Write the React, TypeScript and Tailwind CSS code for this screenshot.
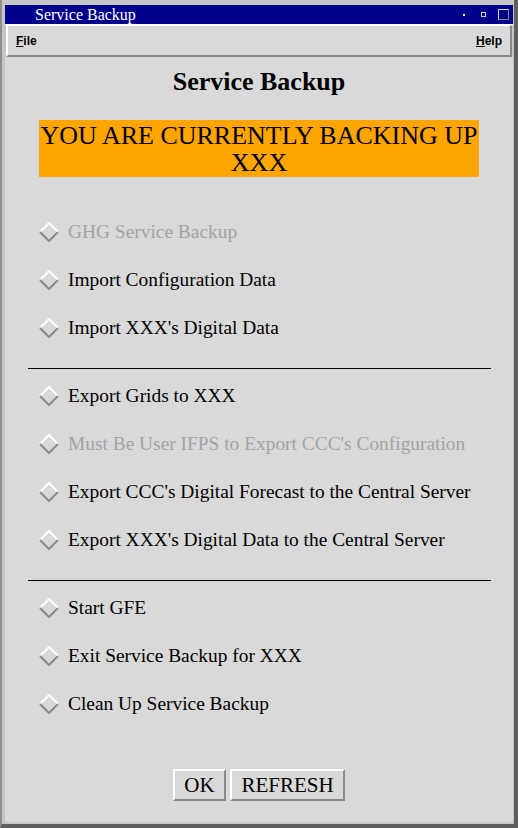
import React from 'react';

type Item = { label: string; disabled?: boolean };

const groups: Item[][] = [
  [
    { label: 'GHG Service Backup', disabled: true },
    { label: 'Import Configuration Data' },
    { label: "Import XXX's Digital Data" },
  ],
  [
    { label: 'Export Grids to XXX' },
    { label: "Must Be User IFPS to Export CCC's Configuration", disabled: true },
    { label: "Export CCC's Digital Forecast to the Central Server" },
    { label: "Export XXX's Digital Data to the Central Server" },
  ],
  [
    { label: 'Start GFE' },
    { label: 'Exit Service Backup for XXX' },
    { label: 'Clean Up Service Backup' },
  ],
];

const Diamond = () => (
  <svg width="20" height="20" viewBox="0 0 20 20" className="shrink-0">
    <polyline points="1,10 10,1 19,10" fill="none" stroke="#ffffff" strokeWidth="2" />
    <polyline points="1,10 10,19 19,10" fill="none" stroke="#8a8a8a" strokeWidth="2" />
  </svg>
);

const Row = ({ item }: { item: Item }) => (
  <div className="h-[48px] flex items-center pl-[34px]">
    <Diamond />
    <span
      className={`ml-[9px] text-[19.4px] leading-none ${item.disabled ? 'text-[#a3a3a3]' : 'text-black'}`}
    >
      {item.label}
    </span>
  </div>
);

export default function App() {
  return (
    <div className="w-[518px] h-[828px] flex flex-col bg-[#c6c6c6] border-l-2 border-l-[#8e8e8e] border-r-4 border-r-[#5e5e5e] border-b-4 border-b-[#5e5e5e] pt-[5px] pl-[3px] pr-[1px] pb-[2px] font-['Liberation_Serif',serif] overflow-hidden">
      {/* title bar */}
      <div className="h-[19px] bg-[#00008b] flex items-center shrink-0">
        <span className="ml-[30px] text-white text-[16px] leading-none font-['Liberation_Serif',serif]">
          Service Backup
        </span>
        <div className="ml-auto flex items-center mr-[4px]">
          <div className="w-[2px] h-[2px] bg-white mr-[16px]" />
          <div className="w-[5px] h-[5px] border border-[#cfcfcf] mr-[12px]" />
          <div className="w-[11px] h-[11px] border border-[#cfcfcf] border-r-[#8a8a8a] border-b-[#8a8a8a]" />
        </div>
      </div>
      <div className="h-[1px] bg-white shrink-0" />

      {/* menu bar */}
      <div className="h-[32px] shrink-0 bg-[#d9d9d9] border-t-[1px] border-l-2 border-white border-r-2 border-r-[#8a8a8a] border-b-2 border-b-[#8a8a8a] ml-[1px] mr-[1px] flex items-center justify-between px-[8px] font-['Liberation_Sans',sans-serif] text-[12px] font-bold text-black">
        <span>
          <span className="underline">F</span>ile
        </span>
        <span>
          <span className="underline">H</span>elp
        </span>
      </div>

      {/* content */}
      <div className="flex-1 bg-[#d9d9d9] flex flex-col">
        <h1 className="mt-[10px] text-center text-[26px] leading-[30px] font-bold text-black font-['Liberation_Serif',serif]">
          Service Backup
        </h1>

        <div className="mt-[23px] mx-auto w-[440px] h-[57px] bg-[#ffa500] text-black text-center text-[26px] leading-[27px] pt-[2px] font-['Liberation_Serif',serif]">
          YOU ARE CURRENTLY BACKING UP XXX
        </div>

        <div className="mt-[31px] flex flex-col">
          {groups.map((g, gi) => (
            <div key={gi}>
              {gi > 0 && <div className="mt-[16px] mb-[3px] ml-[23px] mr-[22px] h-px bg-black" />}
              {g.map(item => (
                <Row key={item.label} item={item} />
              ))}
            </div>
          ))}
        </div>

        <div className="mt-[41px] flex justify-center gap-[4px]">
          <button className="w-[53px] h-[32px] bg-[#d9d9d9] border-2 border-white border-r-[#8a8a8a] border-b-[#8a8a8a] text-[21px] leading-none text-black font-['Liberation_Serif',serif]">
            OK
          </button>
          <button className="w-[115px] h-[32px] bg-[#d9d9d9] border-2 border-white border-r-[#8a8a8a] border-b-[#8a8a8a] text-[21px] leading-none text-black font-['Liberation_Serif',serif]">
            REFRESH
          </button>
        </div>
      </div>
    </div>
  );
}
